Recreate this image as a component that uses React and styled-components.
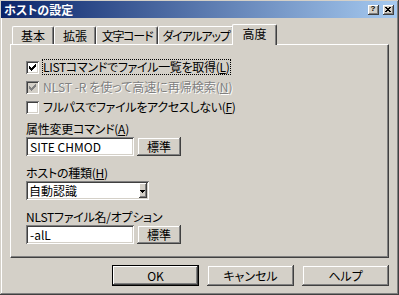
import React from "react";
import styled, { createGlobalStyle } from "styled-components";

const FONT = `"Noto Sans CJK JP", "Noto Sans", sans-serif`;

const Global = createGlobalStyle`
  html, body { margin: 0; padding: 0; background: #d4d0c8; }
  body {
    font-family: ${FONT};
    font-size: 12px;
    font-feature-settings: "palt";
    color: #000;
  }
  * { box-sizing: border-box; }
`;

const raised = `
  box-shadow: inset -1px -1px #404040, inset 1px 1px #d4d0c8, inset -2px -2px #808080, inset 2px 2px #fff;
`;
const sunken = `
  box-shadow: inset 1px 1px #808080, inset -1px -1px #fff, inset 2px 2px #404040, inset -2px -2px #d4d0c8;
`;

const Window = styled.div`
  width: 399px;
  height: 295px;
  padding: 1px;
  background: #d4d0c8;
  box-shadow: inset -1px -1px #404040, inset 1px 1px #d4d0c8, inset -2px -2px #808080, inset 2px 2px #fff;
  display: flex;
  flex-direction: column;
`;

const TitleBar = styled.div`
  height: 17px;
  margin-right: 1px;
  padding: 0 3px 0 3px;
  display: flex;
  align-items: center;
  background: linear-gradient(to right, #0a246a, #a6caf0);
`;

const Title = styled.div`
  color: #fff;
  font-weight: bold;
  font-size: 12px;
  line-height: 17px;
`;

const CaptionButtons = styled.div`
  margin-left: auto;
  display: flex;
  gap: 4px;
`;

const CaptionButton = styled.div`
  width: 11px;
  height: 10px;
  background: #d4d0c8;
  box-shadow: inset -1px -1px #404040, inset 1px 1px #fff, inset -2px -2px #808080;
  display: flex;
  align-items: center;
  justify-content: center;
  font-family: "Liberation Sans", sans-serif;
  font-weight: bold;
  font-size: 8px;
  line-height: 8px;
  padding: 0 1px 1px 0;
`;

const Body = styled.div`
  padding: 6px 0 0 9px;
  display: flex;
  flex-direction: column;
`;

const TabStrip = styled.div`
  height: 20px;
  padding-left: 2px;
  display: flex;
  align-items: flex-end;
`;

const Tab = styled.div`
  width: ${(p) => p.$w}px;
  height: ${(p) => (p.$active ? 21 : 18)}px;
  margin: ${(p) => (p.$active ? "0 -2px -1px -2px" : "0")};
  position: relative;
  z-index: ${(p) => (p.$active ? 1 : 0)};
  background: #d4d0c8;
  border-top: 1px solid #fff;
  border-left: 1px solid #fff;
  border-right: 1px solid #404040;
  border-radius: 2px 2px 0 0;
  box-shadow: inset -1px 0 #808080;
  padding-top: 2px;
  text-align: center;
  line-height: 14px;
  letter-spacing: ${(p) => p.$ls || 0}px;
  white-space: nowrap;
  overflow: hidden;
`;

const Panel = styled.div`
  width: 379px;
  height: 214px;
  border-top: 1px solid #fff;
  border-left: 1px solid #fff;
  border-right: 1px solid #404040;
  border-bottom: 1px solid #404040;
  box-shadow: inset -1px -1px #808080;
  padding: 12px 0 0 15px;
  display: flex;
  flex-direction: column;
`;

const CheckRow = styled.div`
  height: 20px;
  display: flex;
  align-items: center;
  gap: 3px;
  color: ${(p) => (p.$disabled ? "#808080" : "#000")};
  text-shadow: ${(p) => (p.$disabled ? "1px 1px 0 #fff" : "none")};
`;

const Box = styled.div`
  width: 13px;
  height: 13px;
  flex: none;
  background: ${(p) => (p.$disabled ? "#d4d0c8" : "#fff")};
  ${sunken}
  display: flex;
  align-items: center;
  justify-content: center;
`;

const CheckLabel = styled.span`
  border: 1px ${(p) => (p.$focus ? "dotted #000" : "solid transparent")};
  padding: 0 1px 0 0;
  line-height: 14px;
  letter-spacing: ${(p) => (p.$ls !== undefined ? p.$ls : -0.3)}px;
  white-space: nowrap;
`;

const FieldLabel = styled.div`
  margin-top: ${(p) => p.$mt}px;
  line-height: 15px;
  letter-spacing: -0.25px;
  white-space: nowrap;
`;

const FieldRow = styled.div`
  margin-top: 1px;
  display: flex;
  gap: 3px;
`;

const Edit = styled.div`
  width: 108px;
  height: 19px;
  background: #fff;
  ${sunken}
  padding-left: 4px;
  line-height: 19px;
  font-size: 12px;
  white-space: nowrap;
`;

const PushButton = styled.div`
  width: ${(p) => p.$w}px;
  height: ${(p) => p.$h}px;
  background: #d4d0c8;
  ${(p) =>
    p.$default
      ? `border: 1px solid #000; box-shadow: inset -1px -1px #404040, inset 1px 1px #fff, inset -2px -2px #808080;`
      : raised}
  display: flex;
  align-items: center;
  justify-content: center;
  white-space: nowrap;
  padding-bottom: 1px;
`;

const Combo = styled.div`
  margin-top: 1px;
  width: 123px;
  height: 19px;
  background: #fff;
  ${sunken}
  padding: 2px 2px 2px 3px;
  display: flex;
  align-items: center;
`;

const ComboText = styled.div`
  flex: 1;
  line-height: 15px;
  white-space: nowrap;
`;

const DropButton = styled.div`
  width: 8px;
  height: 15px;
  background: #d4d0c8;
  box-shadow: inset -1px -1px #404040, inset 1px 1px #fff, inset -2px -2px #808080;
  display: flex;
  align-items: center;
  justify-content: center;
  padding: 1px 1px 0 0;
`;

const ButtonRow = styled.div`
  width: 379px;
  margin-top: 7px;
  display: flex;
  justify-content: flex-end;
  gap: 8px;
`;

const CHECK = [
  [6, 0], [5, 1], [6, 1], [0, 2], [4, 2], [5, 2], [6, 2],
  [0, 3], [1, 3], [3, 3], [4, 3], [5, 3],
  [0, 4], [1, 4], [2, 4], [3, 4], [4, 4],
  [1, 5], [2, 5], [3, 5], [2, 6],
];

function CheckMark({ color }) {
  return (
    <svg width="7" height="7" viewBox="0 0 7 7" shapeRendering="crispEdges">
      {CHECK.map(([x, y]) => (
        <rect key={`${x}-${y}`} x={x} y={y} width="1" height="1" fill={color} />
      ))}
    </svg>
  );
}

function CloseGlyph() {
  return (
    <svg width="6" height="5" viewBox="0 0 6 5" shapeRendering="crispEdges">
      {[[0,0],[1,0],[4,0],[5,0],[1,1],[2,1],[3,1],[4,1],[2,2],[3,2],[1,3],[2,3],[3,3],[4,3],[0,4],[1,4],[4,4],[5,4]].map(([x, y]) => (
        <rect key={`${x}-${y}`} x={x} y={y} width="1" height="1" fill="#000" />
      ))}
    </svg>
  );
}

function DownArrow() {
  return (
    <svg width="5" height="3" viewBox="0 0 5 3" shapeRendering="crispEdges">
      <rect x="0" y="0" width="5" height="1" fill="#000" />
      <rect x="1" y="1" width="3" height="1" fill="#000" />
      <rect x="2" y="2" width="1" height="1" fill="#000" />
    </svg>
  );
}

const tabs = [
  { label: "基本", w: 42 },
  { label: "拡張", w: 42 },
  { label: "文字コード", w: 62, ls: -1.2 },
  { label: "ダイアルアップ", w: 76, ls: -1.2 },
  { label: "高度", w: 45, active: true },
];

export default function App() {
  return (
    <>
      <Global />
      <Window>
        <TitleBar>
          <Title>ホストの設定</Title>
          <CaptionButtons>
            <CaptionButton>?</CaptionButton>
            <CaptionButton>
              <CloseGlyph />
            </CaptionButton>
          </CaptionButtons>
        </TitleBar>
        <Body>
          <TabStrip>
            {tabs.map((t) => (
              <Tab key={t.label} $w={t.w} $active={t.active} $ls={t.ls}>
                {t.label}
              </Tab>
            ))}
          </TabStrip>
          <Panel>
            <CheckRow>
              <Box>
                <CheckMark color="#000" />
              </Box>
              <CheckLabel $focus>
                LISTコマンドでファイル一覧を取得(<u>L</u>)
              </CheckLabel>
            </CheckRow>
            <CheckRow $disabled>
              <Box $disabled>
                <CheckMark color="#808080" />
              </Box>
              <CheckLabel $ls={0}>
                NLST -R を使って高速に再帰検索(<u>N</u>)
              </CheckLabel>
            </CheckRow>
            <CheckRow>
              <Box />
              <CheckLabel>
                フルパスでファイルをアクセスしない(<u>F</u>)
              </CheckLabel>
            </CheckRow>

            <FieldLabel $mt={4}>
              属性変更コマンド(<u>A</u>)
            </FieldLabel>
            <FieldRow>
              <Edit>SITE CHMOD</Edit>
              <PushButton $w={44} $h={19}>標準</PushButton>
            </FieldRow>

            <FieldLabel $mt={9}>
              ホストの種類(<u>H</u>)
            </FieldLabel>
            <Combo>
              <ComboText>自動認識</ComboText>
              <DropButton>
                <DownArrow />
              </DropButton>
            </Combo>

            <FieldLabel $mt={9}>NLSTファイル名/オプション</FieldLabel>
            <FieldRow>
              <Edit>-alL</Edit>
              <PushButton $w={44} $h={19}>標準</PushButton>
            </FieldRow>
          </Panel>
          <ButtonRow>
            <PushButton $w={87} $h={21} $default>OK</PushButton>
            <PushButton $w={87} $h={21}>キャンセル</PushButton>
            <PushButton $w={87} $h={21}>ヘルプ</PushButton>
          </ButtonRow>
        </Body>
      </Window>
    </>
  );
}
